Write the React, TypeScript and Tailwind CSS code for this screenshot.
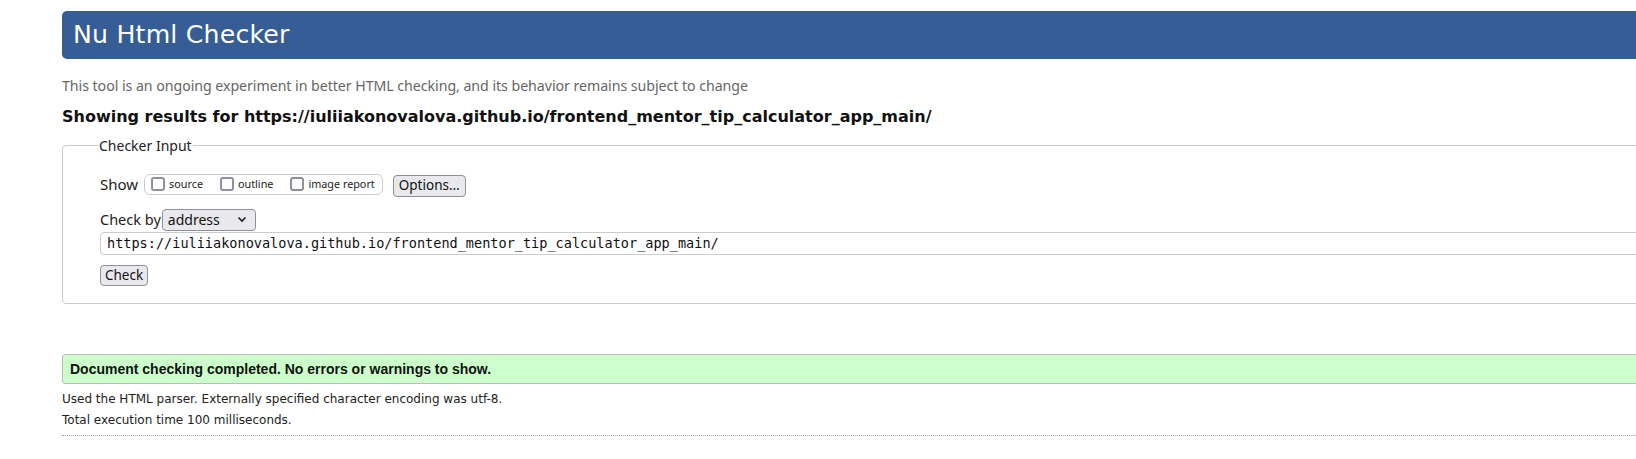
import React from "react";

const url =
  "https://iuliiakonovalova.github.io/frontend_mentor_tip_calculator_app_main/";

function Box({ label }: { label: string }) {
  return (
    <label className="flex items-center gap-[4px]">
      <span className="inline-block w-[14px] h-[14px] rounded-[3px] border-2 border-[#8f8f9d] bg-white" />
      <span className="text-[10.8px] text-[#222]">{label}</span>
    </label>
  );
}

function Btn({ children }: { children: React.ReactNode }) {
  return (
    <button className="h-[22px] px-[5px] rounded-[4px] border border-[#8f8f9d] bg-[#e9e9ed] text-[13.5px] leading-none text-[#111]">
      {children}
    </button>
  );
}

export default function App() {
  return (
    <div
      className="w-screen h-[459px] overflow-hidden bg-white"
      style={{ fontFamily: "'Noto Sans', 'Open Sans', sans-serif" }}
    >
      <div className="w-[1700px] pl-[62px] pt-[11px]">
        {/* Title */}
        <div className="h-[48px] rounded-l-[5px] bg-[#365d95] flex items-center pl-[11px]">
          <h1 className="text-[25.2px] text-white font-['DejaVu_Sans'] tracking-[0.2px]">
            Nu Html Checker
          </h1>
        </div>

        <p className="mt-[17px] text-[14.2px] leading-[20px] text-[#666] tracking-[-0.05px]">
          This tool is an ongoing experiment in better HTML checking, and its
          behavior remains subject to change
        </p>
        <p className="mt-[11px] text-[16px] leading-[20px] font-bold text-[#111] font-['DejaVu_Sans']">
          Showing results for {url}
        </p>

        {/* Checker input */}
        <fieldset className="mt-[8px] h-[169px] border border-[#ccc] rounded-[4px] pl-[37px] pt-[16px]">
          <legend className="text-[14px] text-[#222] px-[1px] -ml-[2px]">
            Checker Input
          </legend>

          <div className="flex items-center">
            <span className="text-[15px] text-[#222] mr-[6px]">Show</span>
            <div className="h-[21px] flex items-center gap-[17px] border border-[#ccc] rounded-[6px] pl-[6px] pr-[7px]">
              <Box label="source" />
              <Box label="outline" />
              <Box label="image report" />
            </div>
            <div className="ml-[10px]">
              <Btn>Options…</Btn>
            </div>
          </div>

          <div className="flex items-center mt-[12px]">
            <span className="text-[14.5px] text-[#222] mr-[1px]">Check by</span>
            <div className="w-[94px] h-[22px] flex items-center justify-between rounded-[4px] border border-[#8f8f9d] bg-[#e9e9ed] pl-[5px] pr-[8px]">
              <span className="text-[14px] text-[#111]">address</span>
              <svg width="10" height="7" viewBox="0 0 10 7">
                <path
                  d="M1.5 1.5 L5 5 L8.5 1.5"
                  fill="none"
                  stroke="#222"
                  strokeWidth="1.6"
                />
              </svg>
            </div>
          </div>

          <div className="mt-[1px] h-[23px] flex items-center border border-[#ccc] rounded-l-[4px] pl-[6px]">
            <span className="text-[13.55px] text-[#111] font-['DejaVu_Sans_Mono']">
              {url}
            </span>
          </div>

          <div className="mt-[7px]">
            <button className="h-[21px] px-[4px] rounded-[4px] border border-[#8f8f9d] bg-[#e9e9ed] text-[13.5px] leading-none text-[#111]">
              Check
            </button>
          </div>
        </fieldset>

        {/* Result */}
        <div className="mt-[50px] h-[30px] flex items-center pl-[7px] bg-[#ccffcc] border border-[#bbb] rounded-l-[3px]">
          <span className="text-[14px] font-bold text-[#111] font-['Liberation_Sans']">
            Document checking completed. No errors or warnings to show.
          </span>
        </div>
        <p className="mt-[5px] text-[12px] leading-[21px] text-[#222] font-['DejaVu_Sans']">
          Used the HTML parser. Externally specified character encoding was
          utf-8.
        </p>
        <p className="text-[12px] leading-[21px] text-[#222] font-['DejaVu_Sans']">
          Total execution time 100 milliseconds.
        </p>
        <div className="mt-[4px] border-t border-dotted border-[#aaa]" />
      </div>
    </div>
  );
}
